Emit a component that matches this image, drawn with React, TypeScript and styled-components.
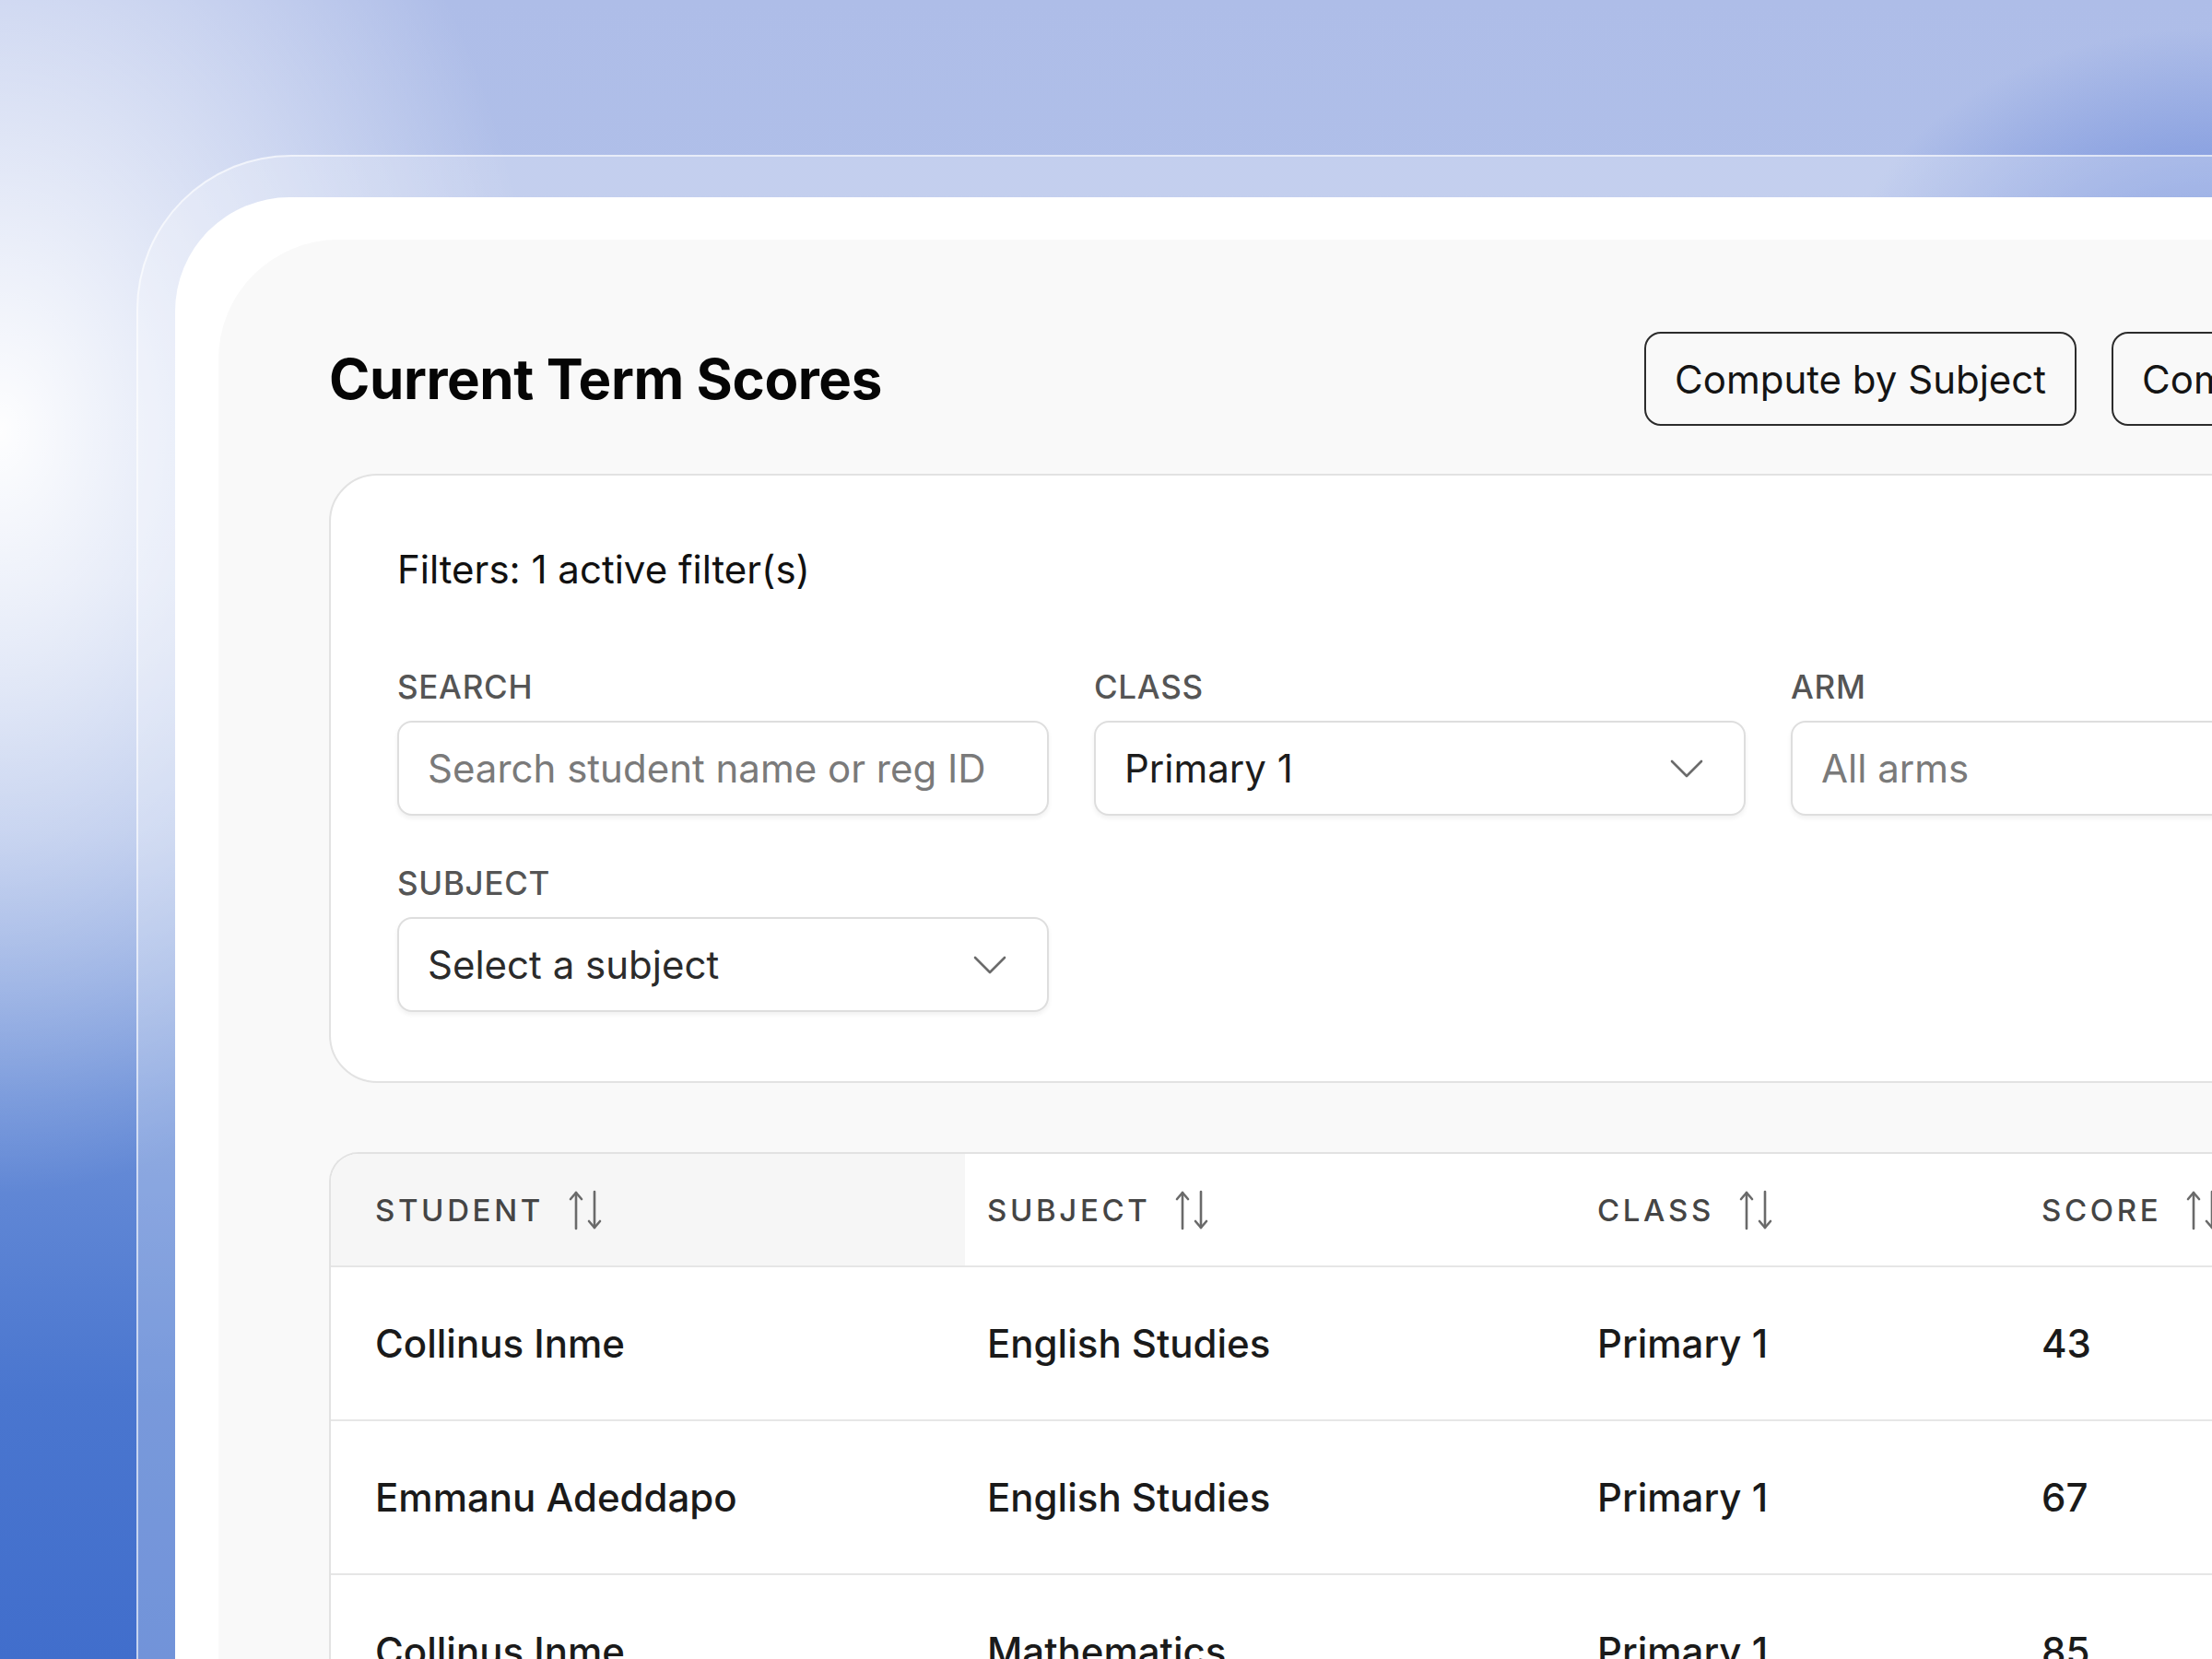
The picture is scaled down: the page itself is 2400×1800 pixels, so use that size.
import React from "react";
import styled, { createGlobalStyle } from "styled-components";

const GlobalStyle = createGlobalStyle`
  html, body {
    margin: 0;
    padding: 0;
  }
  body {
    width: 2400px;
    height: 1800px;
    overflow: hidden;
    font-family: Inter, "Liberation Sans", Arial, sans-serif;
    -webkit-font-smoothing: antialiased;
  }
  * {
    box-sizing: border-box;
  }
`;

const rows = [
  { student: "Collinus Inme", subject: "English Studies", klass: "Primary 1", score: 43 },
  { student: "Emmanu Adeddapo", subject: "English Studies", klass: "Primary 1", score: 67 },
  { student: "Collinus Inme", subject: "Mathematics", klass: "Primary 1", score: 85 },
];

const columns = [
  { key: "student", label: "Student" },
  { key: "subject", label: "Subject" },
  { key: "class", label: "Class" },
  { key: "score", label: "Score" },
];

const SortIcon = () => (
  <svg width="42" height="44" viewBox="0 0 42 44" fill="none" stroke="#6a6a6a" strokeWidth="2.6" strokeLinecap="round" strokeLinejoin="round">
    <path d="M11 3v39" />
    <path d="M5 10l6-7 6 7" />
    <path d="M31 2v39" />
    <path d="M25 34l6 7 6-7" />
  </svg>
);

const Chevron = () => (
  <svg width="36" height="20" viewBox="0 0 36 20" fill="none" stroke="#6b6b6b" strokeWidth="2.6" strokeLinecap="round" strokeLinejoin="round">
    <path d="M2 2l16 16L34 2" />
  </svg>
);

const App = () => {
  return (
    <>
      <GlobalStyle />
      <Backdrop>
        <Glass>
          <Window>
            <Panel>
              <TopBar>
                <Title>Current Term Scores</Title>
                <Actions>
                  <OutlineButton>Compute by Subject</OutlineButton>
                  <OutlineButton>Compute by Class</OutlineButton>
                </Actions>
              </TopBar>

              <FilterCard>
                <FilterSummary>Filters: 1 active filter(s)</FilterSummary>
                <FieldGrid>
                  <Field>
                    <Label>Search</Label>
                    <TextInput placeholder="Search student name or reg ID" />
                  </Field>
                  <Field>
                    <Label>Class</Label>
                    <Select>
                      <SelectValue $tone="#1c1c1c">Primary 1</SelectValue>
                      <Chevron />
                    </Select>
                  </Field>
                  <Field>
                    <Label>Arm</Label>
                    <TextInput placeholder="All arms" />
                  </Field>
                  <Field>
                    <Label>Subject</Label>
                    <Select>
                      <SelectValue $tone="#2b2b2b">Select a subject</SelectValue>
                      <Chevron />
                    </Select>
                  </Field>
                </FieldGrid>
              </FilterCard>

              <TableCard>
                <HeadRow>
                  {columns.map((c, i) => (
                    <HeadCell key={c.key} $active={i === 0}>
                      <span>{c.label}</span>
                      <SortIcon />
                    </HeadCell>
                  ))}
                </HeadRow>
                {rows.map((r, i) => (
                  <BodyRow key={i}>
                    <Cell>{r.student}</Cell>
                    <Cell>{r.subject}</Cell>
                    <Cell>{r.klass}</Cell>
                    <Cell>{r.score}</Cell>
                  </BodyRow>
                ))}
              </TableCard>
            </Panel>
          </Window>
        </Glass>
      </Backdrop>
    </>
  );
};

export default App;

const Backdrop = styled.div`
  width: 2400px;
  height: 1800px;
  overflow: hidden;
  padding: 168px 0 0 148px;
  background:
    radial-gradient(ellipse 820px 1150px at 0% 26%, rgba(255, 255, 255, 0.98), rgba(255, 255, 255, 0) 72%),
    radial-gradient(ellipse 560px 440px at 100% 20%, #5b7cd6, rgba(91, 124, 214, 0) 75%),
    linear-gradient(180deg, #aebde8 0%, #b3c3ea 35%, #9bb1e4 50%, #6b8fd8 66%, #4a76cf 84%, #416ecc 100%);
`;

const Glass = styled.div`
  width: 2700px;
  height: 1800px;
  padding: 44px 0 0 40px;
  border-radius: 168px 0 0 0;
  border-top: 2px solid rgba(255, 255, 255, 0.6);
  border-left: 2px solid rgba(255, 255, 255, 0.6);
  background: rgba(255, 255, 255, 0.26);
`;

const Window = styled.div`
  height: 100%;
  padding: 46px 0 0 47px;
  border-radius: 124px 0 0 0;
  background: #ffffff;
`;

const Panel = styled.div`
  width: 2610px;
  height: 100%;
  padding: 100px 120px 0;
  border-radius: 130px 0 0 0;
  background: #f9f9f9;
`;

const TopBar = styled.div`
  display: flex;
  align-items: center;
  padding-right: 8px;
`;

const Title = styled.h1`
  margin: 0;
  font-size: 60px;
  font-weight: 700;
  letter-spacing: -0.4px;
  color: #050505;
`;

const Actions = styled.div`
  display: flex;
  gap: 38px;
  margin-left: auto;
`;

const OutlineButton = styled.button`
  height: 102px;
  padding: 0 31px;
  border: 2.5px solid #2c2c2c;
  border-radius: 18px;
  background: transparent;
  font-family: inherit;
  font-size: 42px;
  color: #141414;
  white-space: nowrap;
`;

const FilterCard = styled.section`
  margin-top: 52px;
  padding: 76px 72px 75px;
  background: #ffffff;
  border: 2px solid #e2e2e2;
  border-radius: 52px;
`;

const FilterSummary = styled.div`
  font-size: 42px;
  line-height: 52px;
  color: #111111;
`;

const FieldGrid = styled.div`
  display: grid;
  grid-template-columns: repeat(3, 707px);
  column-gap: 49px;
  row-gap: 51px;
  margin-top: 79px;
`;

const Field = styled.div`
  display: flex;
  flex-direction: column;
  gap: 15px;
`;

const Label = styled.label`
  font-size: 35px;
  line-height: 44px;
  font-weight: 500;
  text-transform: uppercase;
  letter-spacing: 0.02em;
  color: #555555;
`;

const controlBox = `
  height: 103px;
  width: 100%;
  padding: 0 31px;
  background: #ffffff;
  border: 2px solid #dedede;
  border-radius: 16px;
  box-shadow: 0 3px 5px rgba(0, 0, 0, 0.06);
  font-family: inherit;
  font-size: 42px;
`;

const TextInput = styled.input`
  ${controlBox}
  outline: none;
  color: #1c1c1c;

  &::placeholder {
    color: #7a7a7a;
  }
`;

const Select = styled.div`
  ${controlBox}
  display: flex;
  align-items: center;
  justify-content: space-between;
  padding-right: 44px;
`;

const SelectValue = styled.span<{ $tone: string }>`
  color: ${(p) => p.$tone};
`;

const TableCard = styled.section`
  margin-top: 75px;
  background: #ffffff;
  border: 2px solid #e2e2e2;
  border-bottom: none;
  border-radius: 32px 32px 0 0;
  overflow: hidden;
`;

const gridColumns = `
  display: grid;
  grid-template-columns: 688px 662px 482px 1fr;
  border-bottom: 2px solid #e6e6e6;
`;

const HeadRow = styled.div`
  ${gridColumns}
  height: 123px;
`;

const HeadCell = styled.div<{ $active?: boolean }>`
  display: flex;
  align-items: center;
  gap: 24px;
  padding-left: 24px;
  background: ${(p) => (p.$active ? "#f6f6f6" : "#ffffff")};
  font-size: 33px;
  font-weight: 500;
  text-transform: uppercase;
  letter-spacing: 0.11em;
  color: #454545;

  &:first-child {
    padding-left: 48px;
  }
`;

const BodyRow = styled.div`
  ${gridColumns}
  height: 167px;
`;

const Cell = styled.div`
  display: flex;
  align-items: center;
  padding-left: 24px;
  font-size: 42px;
  font-weight: 500;
  color: #1a1a1a;

  &:first-child {
    padding-left: 48px;
  }
`;
